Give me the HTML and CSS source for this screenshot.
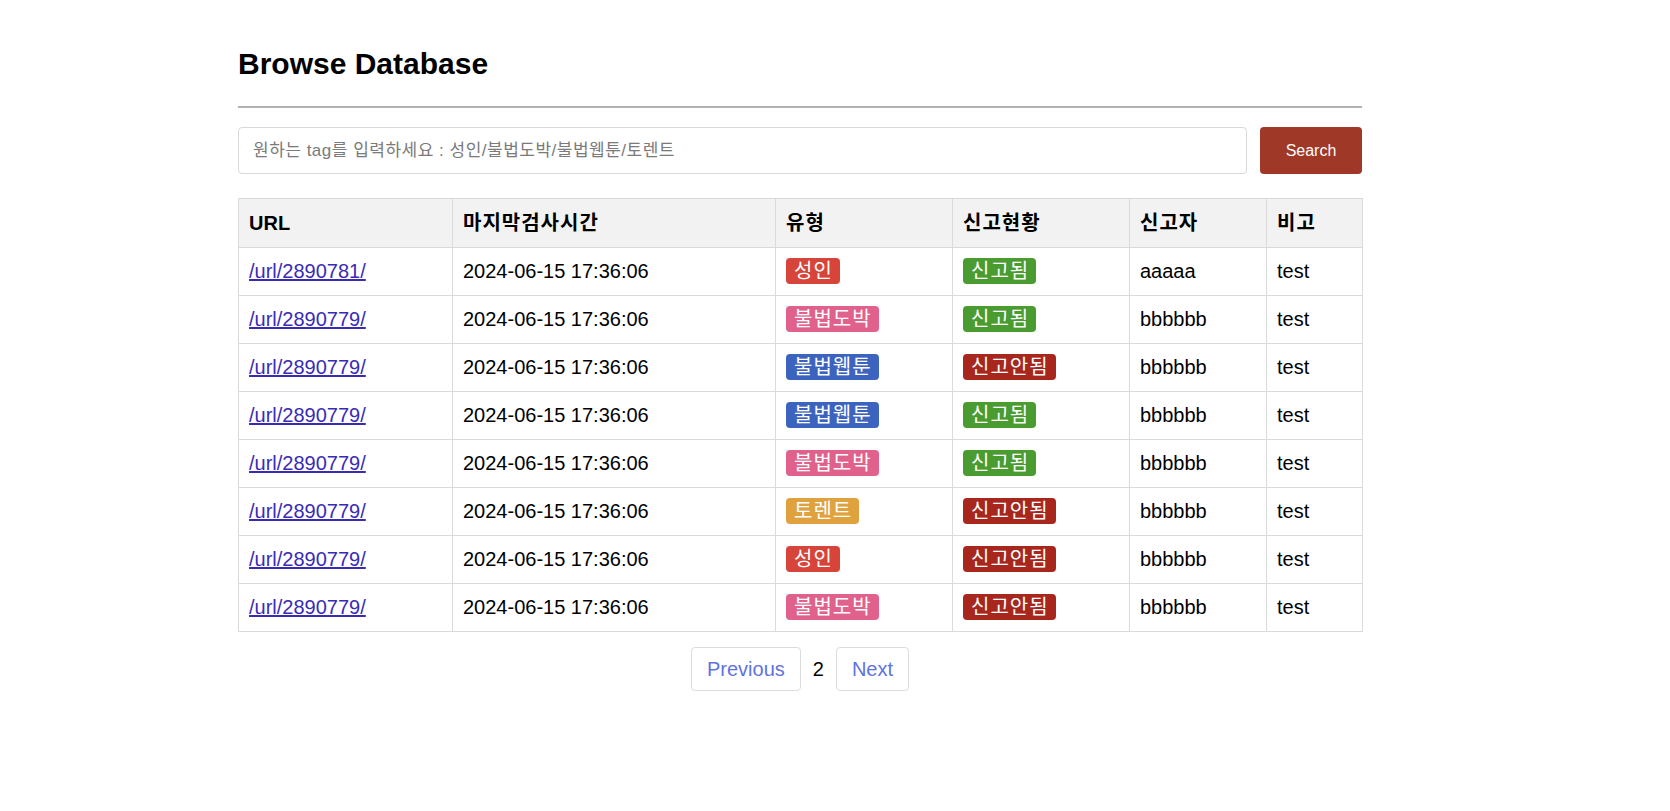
FILE: index.html
```html
<!DOCTYPE html>
<html lang="ko">
<head>
<meta charset="utf-8">
<title>Browse Database</title>
<link rel="stylesheet" href="styles.css">
</head>
<body>
<div class="page">
  <h1 class="title">Browse Database</h1>
  <hr class="rule">
  <form class="search">
    <input class="search-input" type="text" placeholder="원하는 tag를 입력하세요 : 성인/불법도박/불법웹툰/토렌트">
    <button class="search-btn" type="button">Search</button>
  </form>
  <table class="grid">
    <thead>
      <tr>
        <th class="c-url">URL</th>
        <th class="c-time ko">마지막검사시간</th>
        <th class="c-type ko">유형</th>
        <th class="c-status ko">신고현황</th>
        <th class="c-who ko">신고자</th>
        <th class="c-note ko">비고</th>
      </tr>
    </thead>
    <tbody>
      <tr><td><a href="#">/url/2890781/</a></td><td>2024-06-15 17:36:06</td><td><span class="badge adult">성인</span></td><td><span class="badge ok">신고됨</span></td><td>aaaaa</td><td>test</td></tr>
      <tr><td><a href="#">/url/2890779/</a></td><td>2024-06-15 17:36:06</td><td><span class="badge gamble">불법도박</span></td><td><span class="badge ok">신고됨</span></td><td>bbbbbb</td><td>test</td></tr>
      <tr><td><a href="#">/url/2890779/</a></td><td>2024-06-15 17:36:06</td><td><span class="badge toon">불법웹툰</span></td><td><span class="badge no">신고안됨</span></td><td>bbbbbb</td><td>test</td></tr>
      <tr><td><a href="#">/url/2890779/</a></td><td>2024-06-15 17:36:06</td><td><span class="badge toon">불법웹툰</span></td><td><span class="badge ok">신고됨</span></td><td>bbbbbb</td><td>test</td></tr>
      <tr><td><a href="#">/url/2890779/</a></td><td>2024-06-15 17:36:06</td><td><span class="badge gamble">불법도박</span></td><td><span class="badge ok">신고됨</span></td><td>bbbbbb</td><td>test</td></tr>
      <tr><td><a href="#">/url/2890779/</a></td><td>2024-06-15 17:36:06</td><td><span class="badge torrent">토렌트</span></td><td><span class="badge no">신고안됨</span></td><td>bbbbbb</td><td>test</td></tr>
      <tr><td><a href="#">/url/2890779/</a></td><td>2024-06-15 17:36:06</td><td><span class="badge adult">성인</span></td><td><span class="badge no">신고안됨</span></td><td>bbbbbb</td><td>test</td></tr>
      <tr><td><a href="#">/url/2890779/</a></td><td>2024-06-15 17:36:06</td><td><span class="badge gamble">불법도박</span></td><td><span class="badge no">신고안됨</span></td><td>bbbbbb</td><td>test</td></tr>
    </tbody>
  </table>
  <nav class="pager">
    <a class="pager-btn" href="#">Previous</a>
    <span class="pager-num">2</span>
    <a class="pager-btn" href="#">Next</a>
  </nav>
</div>
</body>
</html>
```

FILE: styles.css
```css
* { box-sizing: border-box; }

html, body {
  margin: 0;
  padding: 0;
  background: #fff;
}

body {
  font-family: "Liberation Sans", Arial, "Noto Sans CJK KR", sans-serif;
  color: #000;
}

.page {
  width: 1124px;
  margin-left: 238px;
  padding-top: 47px;
}

.title {
  margin: 0;
  font-size: 30px;
  font-weight: bold;
  line-height: 34px;
}

.rule {
  margin: 25px 0 0;
  border: 0;
  border-top: 2px solid #b3b3b3;
  height: 0;
}

.search {
  display: flex;
  gap: 13px;
  margin: 19px 0 0;
}

.search-input {
  flex: 1;
  height: 47px;
  border: 1px solid #d9d9d9;
  border-radius: 4px;
  padding: 0 14px;
  font-family: "Liberation Sans", Arial, "Noto Sans CJK KR", sans-serif;
  font-size: 17px;
  letter-spacing: 0.5px;
  color: #333;
  outline: none;
}

.search-input::placeholder {
  color: #7a7a7a;
}

.search-btn {
  width: 102px;
  height: 47px;
  border: 0;
  border-radius: 4px;
  background: #9f3826;
  color: #fff;
  font-family: "Liberation Sans", Arial, sans-serif;
  font-size: 16px;
}

.grid {
  width: 100%;
  margin-top: 24px;
  border-collapse: collapse;
  table-layout: fixed;
  font-size: 20px;
}

.grid th, .grid td {
  border: 1px solid #dadada;
  padding: 12px 10px;
  text-align: left;
  line-height: 23px;
}

.grid th {
  padding-top: 13px;
  background: #f2f2f2;
  font-weight: bold;
}

.grid th.ko {
  letter-spacing: 1px;
}

.c-url { width: 214px; }
.c-time { width: 323px; }
.c-type { width: 177px; }
.c-status { width: 177px; }
.c-who { width: 137px; }
.c-note { width: 96px; }

.grid a {
  color: #3a2bb6;
  text-decoration: underline;
}

.badge {
  padding: 2px 7px 2px 8px;
  border-radius: 4px;
  color: #fff;
  font-size: 20px;
  letter-spacing: 1px;
}

.adult { background: #d6443a; }
.gamble { background: #e0628c; }
.toon { background: #3c63bd; }
.torrent { background: #dfa23e; }
.ok { background: #4a9c31; }
.no { background: #a8271d; }

.pager {
  display: flex;
  justify-content: center;
  align-items: center;
  gap: 12px;
  margin-top: 15px;
}

.pager-btn {
  display: inline-block;
  height: 44px;
  padding: 0 15px;
  line-height: 42px;
  border: 1px solid #dcdcdc;
  border-radius: 4px;
  color: #6073e0;
  font-size: 20px;
  text-decoration: none;
}

.pager-num {
  font-size: 20px;
}
```
